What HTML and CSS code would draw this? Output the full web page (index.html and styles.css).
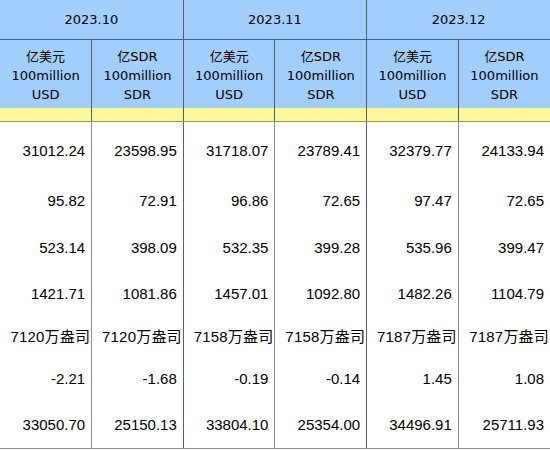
FILE: index.html
```html
<!DOCTYPE html>
<html lang="zh">
<head>
<meta charset="utf-8">
<title>Reserves</title>
<link rel="stylesheet" href="styles.css">
</head>
<body>
<table class="grid">
  <colgroup>
    <col><col><col><col><col><col>
  </colgroup>
  <thead>
    <tr class="months">
      <th colspan="2" class="major">2023.10</th>
      <th colspan="2" class="major">2023.11</th>
      <th colspan="2">2023.12</th>
    </tr>
    <tr class="units">
      <th>亿美元<br>100million<br>USD</th>
      <th class="major">亿SDR<br>100million<br>SDR</th>
      <th>亿美元<br>100million<br>USD</th>
      <th class="major">亿SDR<br>100million<br>SDR</th>
      <th>亿美元<br>100million<br>USD</th>
      <th>亿SDR<br>100million<br>SDR</th>
    </tr>
    <tr class="band">
      <th></th><th class="major"></th><th></th><th class="major"></th><th></th><th></th>
    </tr>
  </thead>
  <tbody>
    <tr class="r1"><td>31012.24</td><td class="major">23598.95</td><td>31718.07</td><td class="major">23789.41</td><td>32379.77</td><td>24133.94</td></tr>
    <tr class="r2"><td>95.82</td><td class="major">72.91</td><td>96.86</td><td class="major">72.65</td><td>97.47</td><td>72.65</td></tr>
    <tr class="r3"><td>523.14</td><td class="major">398.09</td><td>532.35</td><td class="major">399.28</td><td>535.96</td><td>399.47</td></tr>
    <tr class="r4"><td>1421.71</td><td class="major">1081.86</td><td>1457.01</td><td class="major">1092.80</td><td>1482.26</td><td>1104.79</td></tr>
    <tr class="r5"><td>7120万盎司</td><td class="major">7120万盎司</td><td>7158万盎司</td><td class="major">7158万盎司</td><td>7187万盎司</td><td>7187万盎司</td></tr>
    <tr class="r6"><td>-2.21</td><td class="major">-1.68</td><td>-0.19</td><td class="major">-0.14</td><td>1.45</td><td>1.08</td></tr>
    <tr class="r7"><td>33050.70</td><td class="major">25150.13</td><td>33804.10</td><td class="major">25354.00</td><td>34496.91</td><td>25711.93</td></tr>
  </tbody>
</table>
</body>
</html>
```
FILE: styles.css
```css
html, body {
  margin: 0;
  padding: 0;
  background: #ffffff;
}

.grid {
  width: 550px;
  table-layout: fixed;
  border-collapse: collapse;
  color: #000000;
}

.grid th,
.grid td {
  padding: 0;
  border: 0;
}

.grid thead th {
  background: #a2cefc;
  font-family: "DejaVu Sans", "Noto Sans CJK SC", sans-serif;
  font-size: 13px;
  font-weight: normal;
  text-align: center;
  vertical-align: middle;
  line-height: 19px;
}

.months th {
  height: 39px;
  border-bottom: 1px solid #55606e;
}

.months th.major,
.units th,
.band th {
  border-right: 1px solid #55606e;
}

.units th:last-child,
.band th:last-child,
.months th:last-child {
  border-right: 0;
}

.grid thead .units th {
  height: 66px;
  padding-top: 2px;
}

.grid thead .band th {
  background: #fcf99c;
  height: 13px;
  border-bottom: 1px solid #8c8c8c;
  padding: 0;
  line-height: 0;
}

.grid td {
  font-family: "Liberation Sans", "Noto Sans CJK SC", sans-serif;
  font-size: 15px;
  text-align: right;
  vertical-align: middle;
  padding-right: 6px;
  white-space: nowrap;
  border-right: 1px solid #8c8c8c;
}

.grid td.major {
  border-right: 1px solid #55606e;
}

.grid td:last-child {
  border-right: 0;
}

.r5 td {
  padding-right: 1px;
  letter-spacing: 0.2px;
}

.r1 td { height: 56px; }
.r2 td { height: 45px; }
.r3 td { height: 48px; }
.r4 td { height: 44px; }
.r5 td { height: 40px; }
.r6 td { height: 46px; }
.r7 td { height: 47px; border-bottom: 1px solid #8c8c8c; }
```
